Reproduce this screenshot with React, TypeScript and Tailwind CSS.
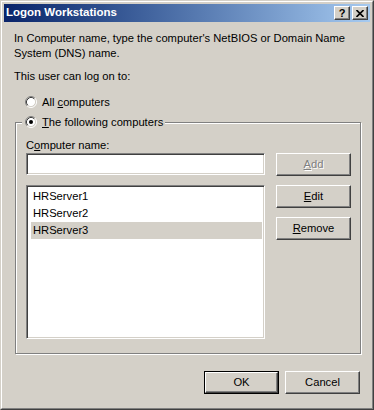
import React from 'react';

const raised =
  'border border-t-white border-l-white border-r-[#404040] border-b-[#404040] shadow-[inset_-1px_-1px_0_#808080] bg-[#d4d0c8]';
const sunken =
  'border border-t-[#808080] border-l-[#808080] border-r-white border-b-white shadow-[inset_1px_1px_0_#404040,inset_-1px_-1px_0_#d4d0c8] bg-white';

function Radio({ checked }: { checked?: boolean }) {
  return (
    <svg width="12" height="12" viewBox="0 0 12 12" className="shrink-0">
      <circle cx="6" cy="6" r="4.5" fill="#fff" />
      <path d="M2.11 9.89 A5.5 5.5 0 0 1 9.89 2.11" stroke="#808080" fill="none" />
      <path d="M9.89 2.11 A5.5 5.5 0 0 1 2.11 9.89" stroke="#fff" fill="none" />
      <path d="M2.82 9.18 A4.5 4.5 0 0 1 9.18 2.82" stroke="#404040" fill="none" />
      <path d="M9.18 2.82 A4.5 4.5 0 0 1 2.82 9.18" stroke="#d4d0c8" fill="none" />
      {checked && <circle cx="6" cy="6" r="2" fill="#000" />}
    </svg>
  );
}

function Btn({ children, disabled }: { children: React.ReactNode; disabled?: boolean }) {
  return (
    <button
      type="button"
      className={`${raised} w-[75px] h-[23px] flex items-center justify-center ${
        disabled ? 'text-[#808080] [text-shadow:1px_1px_0_#fff]' : ''
      }`}
    >
      {children}
    </button>
  );
}

export default function App() {
  return (
    <div className="w-[374px] h-[410px] bg-[#d4d0c8] border border-t-[#d4d0c8] border-l-[#d4d0c8] border-r-[#404040] border-b-[#404040] font-['Liberation_Sans',Arial,sans-serif] text-[11.2px] text-black">
      <div className="h-full border border-t-white border-l-white border-r-[#808080] border-b-[#808080] p-[2px] flex flex-col">
        {/* title bar */}
        <div className="h-[18px] flex items-center justify-between bg-gradient-to-r from-[#0a246a] to-[#a6caf0] pl-[2px] pr-[2px]">
          <span className="text-white font-bold text-[11.5px]">Logon Workstations</span>
          <div className="flex gap-[2px]">
            <div className={`${raised} w-[16px] h-[14px] flex items-center justify-center text-[11px] font-bold leading-none`}>
              ?
            </div>
            <div className={`${raised} w-[16px] h-[14px] flex items-center justify-center`}>
              <svg width="8" height="7" viewBox="0 0 8 7">
                <path d="M0.5 0 L7.5 7 M7.5 0 L0.5 7" stroke="#000" strokeWidth="1.6" />
              </svg>
            </div>
          </div>
        </div>

        {/* body */}
        <div className="flex flex-col">
          <p className="ml-[10px] mt-[9px] leading-[15px]">
            In Computer name, type the computer's NetBIOS or Domain Name
            <br />
            System (DNS) name.
          </p>
          <p className="ml-[10px] mt-[8px] leading-[15px]">This user can log on to:</p>

          <div className="ml-[21px] mt-[10px] h-[16px] flex items-center gap-[5px]">
            <Radio />
            <span>
              All <span className="underline">c</span>omputers
            </span>
          </div>
          <div className="relative z-10 ml-[18px] mt-[4px] h-[16px] flex items-center self-start gap-[5px] bg-[#d4d0c8] pl-[3px] pr-[2px]">
            <Radio checked />
            <span>
              <span className="underline">T</span>he following computers
            </span>
          </div>

          {/* group box */}
          <div className="ml-[11px] -mt-[8px] w-[346px] h-[232px] border border-[#808080] shadow-[inset_1px_1px_0_#fff,1px_1px_0_#fff] pl-[10px] pt-[15px] flex flex-col">
            <span className="leading-[15px]">
              C<span className="underline">o</span>mputer name:
            </span>
            <div className="flex items-start gap-[11px]">
              <div className={`${sunken} w-[239px] h-[22px]`} />
              <Btn disabled>
                <span className="underline">A</span>dd
              </Btn>
            </div>
            <div className="flex items-start gap-[11px] mt-[9px]">
              <div className={`${sunken} w-[239px] h-[154px] p-[2px] pl-[4px] flex flex-col`}>
                <div className="h-[17px] flex items-center pl-[2px]">HRServer1</div>
                <div className="h-[17px] flex items-center pl-[2px]">HRServer2</div>
                <div className="h-[17px] flex items-center pl-[2px] bg-[#d4d0c8]">HRServer3</div>
              </div>
              <div className="flex flex-col gap-[9px]">
                <Btn>
                  <span className="underline">E</span>dit
                </Btn>
                <Btn>
                  <span className="underline">R</span>emove
                </Btn>
              </div>
            </div>
          </div>

          {/* footer */}
          <div className="mt-[17px] flex justify-end gap-[6px] mr-[10px]">
            <div className="border border-black">
              <button
                type="button"
                className="border border-t-white border-l-white border-r-[#404040] border-b-[#404040] shadow-[inset_-1px_-1px_0_#808080] bg-[#d4d0c8] w-[73px] h-[21px] flex items-center justify-center"
              >
                OK
              </button>
            </div>
            <Btn>Cancel</Btn>
          </div>
        </div>
      </div>
    </div>
  );
}
